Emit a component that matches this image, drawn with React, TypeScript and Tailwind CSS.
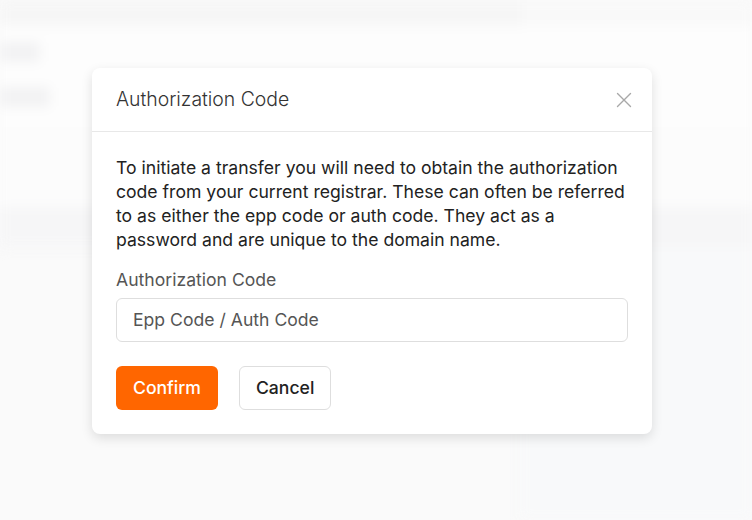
import React from "react";

export default function App() {
  return (
    <div
      className="relative w-[752px] h-[520px] overflow-hidden bg-[#fafafa]"
      style={{ fontFamily: "Inter, 'Noto Sans', sans-serif" }}
    >
      {/* faint blurred page behind the dialog */}
      <div className="flex flex-col h-full blur-[6px] pointer-events-none">
        <div className="flex h-[26px] bg-[#f6f6f6]">
          <div className="flex-1" />
          <div className="w-[230px] bg-[#f9f9f9]" />
        </div>
        <div className="flex flex-col gap-[25px] pt-[16px] pb-[20px] bg-[#fdfdfd]">
          <div className="w-[40px] h-[20px] bg-[#f2f2f3] rounded" />
          <div className="w-[50px] h-[20px] bg-[#f2f2f3] rounded" />
        </div>
        <div className="h-[80px] bg-[#fcfcfc]" />
        <div className="h-[40px] bg-[#f6f6f7]" />
        <div className="flex flex-1 justify-end">
          <div className="w-[232px] bg-[#f8f9fa]" />
        </div>
      </div>

      <div className="absolute left-[92px] top-[68px] w-[560px] bg-white rounded-lg shadow-[0_4px_12px_rgba(0,0,0,0.12)]">
        <div className="h-[64px] flex items-center justify-between pl-6 pr-[20px] border-b border-[#e8e8e8]">
          <h2 className="text-[19.4px] text-[#333] font-light">Authorization Code</h2>
          <svg width="16" height="16" viewBox="0 0 16 16" className="text-[#a8a8a8]">
            <path d="M1.5 1.5L14.5 14.5M14.5 1.5L1.5 14.5" stroke="currentColor" strokeWidth="1.4" strokeLinecap="round" />
          </svg>
        </div>
        <div className="flex flex-col px-6 pt-[24px] pb-6">
          <p className="text-[17.6px] leading-6 text-[#222]">
            To initiate a transfer you will need to obtain the authorization code from your current
            registrar. These can often be referred to as either the epp code or auth code. They act
            as a password and are unique to the domain name.
          </p>
          <label className="mt-[16px] text-[17.6px] leading-6 text-[#555]">Authorization Code</label>
          <div className="mt-[6px] h-[44px] border border-[#dedede] rounded-md flex items-center px-4 text-[17.6px] text-[#555]">
            Epp Code / Auth Code
          </div>
          <div className="mt-6 flex gap-[21px]">
            <button className="h-[44px] px-[17px] rounded-md bg-[#ff6600] text-white text-[17.6px] font-medium">
              Confirm
            </button>
            <button className="h-[44px] px-[16px] rounded-md border border-[#dedede] bg-white text-[#222] text-[17.6px] font-medium">
              Cancel
            </button>
          </div>
        </div>
      </div>
    </div>
  );
}
